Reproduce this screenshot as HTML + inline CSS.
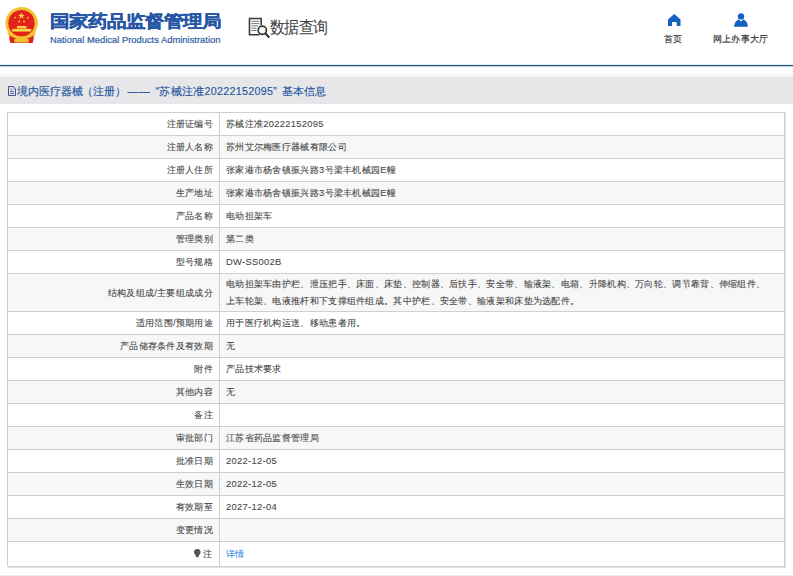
<!DOCTYPE html>
<html><head><meta charset="utf-8">
<style>
*{margin:0;padding:0;box-sizing:border-box}
html,body{width:793px;height:576px;overflow:hidden;background:#fff;font-family:"Liberation Sans",sans-serif}
.abs{position:absolute}
#emblem{left:0;top:0;width:45px;height:48px}
#t1{left:50px;top:11px;transform:scaleY(0.87);transform-origin:0 13px;font-size:19px;font-weight:900;color:#2656a5;-webkit-text-stroke:0.4px #2656a5;letter-spacing:0px;white-space:nowrap;line-height:22px}
#t2{left:50px;top:34px;font-size:9.4px;color:#2f5ca5;-webkit-text-stroke:0.2px #2f5ca5;white-space:nowrap;line-height:12px}
#qicon{left:248px;top:17px;width:23px;height:23px}
#qtext{left:270px;top:16.5px;letter-spacing:-0.7px;font-size:14.6px;color:#404040;white-space:nowrap;line-height:18px;transform:scaleY(1.13);transform-origin:0 0}
#home{left:668px;top:13.5px;width:12.5px;height:12.5px}
#user{left:734px;top:13px;width:14px;height:14px}
.nav{font-size:9.4px;letter-spacing:0.4px;color:#333;white-space:nowrap;line-height:11px;top:33px;-webkit-text-stroke:0.15px #333}
#line{left:0;top:64px;width:793px;height:3px;background:linear-gradient(#dff0f2 0,#dff0f2 33.3%,#27558a 33.3%,#27558a 66.6%,#c5d3e0 66.6%)}
#grad{left:0;top:67px;width:793px;height:10px;background:linear-gradient(#fff 0,#fefdfd 60%,#f3f3ef)}
#bar{left:0;top:77px;width:793px;height:27px;background:#e7e7e9}
.bt{top:84px;font-size:10.7px;color:#1f56a0;white-space:nowrap;line-height:14px;-webkit-text-stroke:0.15px #1f56a0}
#docicon{left:8px;top:86px;width:8px;height:10px}
table{position:absolute;left:7px;top:112px;width:778px;border-collapse:collapse;border:1px solid #cfcfcf;box-shadow:1px 1px 0 #e2e2e2}
td{border:1px solid #cfcfcf;height:23px;font-size:9.4px;letter-spacing:0.3px;color:#484848;-webkit-text-stroke:0.1px #484848;padding-bottom:1px !important;line-height:15px;padding:0 6px}
td.l{width:212px;text-align:right;padding-right:6px}

tr:nth-child(even) td{background:#f7f7f7}
#foot{left:0;top:575px;width:793px;height:1px;background:#ebebeb}
</style></head><body>
<svg id="emblem" class="abs" viewBox="0 0 45 48">
  <path d="M9.5 32 Q8.5 39 10.5 43 L32.5 43 Q34.5 39 33.5 32z" fill="#d9261c"/>
  <circle cx="21.6" cy="23.2" r="16.2" fill="#f3c232"/>
  <circle cx="21.5" cy="23.2" r="13.2" fill="#e2231a"/>
  <path d="M21.4 12.6 l0.9 2.2 2.4 0.1-1.9 1.5 0.7 2.3-2.1-1.4-2 1.4 0.7-2.3-1.9-1.5 2.4-0.1z" fill="#f7d54a"/>
  <circle cx="15.2" cy="17.6" r="0.9" fill="#f5c94a"/>
  <circle cx="27.9" cy="17.6" r="0.9" fill="#f5c94a"/>
  <circle cx="19.2" cy="21.5" r="0.9" fill="#f5c94a"/>
  <circle cx="24" cy="21.5" r="0.9" fill="#f5c94a"/>
  <rect x="17" y="26" width="9.4" height="2.4" fill="#f7d34a"/>
  <rect x="12.2" y="28.8" width="19" height="2.8" fill="#f7d34a"/>
  <path d="M7 32 Q21.6 41 36.2 32 L34.5 35.5 Q21.6 42 8.7 35.5z" fill="#f3c232"/>
  <path d="M14 39.6 Q17 37.8 21.6 39 Q26 37.8 29 39.6 L28.4 42.4 L14.6 42.4z" fill="#f3c232"/>
</svg>
<div id="t1" class="abs">国家药品监督管理局</div>
<div id="t2" class="abs">National Medical Products Administration</div>
<svg id="qicon" class="abs" viewBox="0 0 23 23">
  <path d="M11.5 17.7 H1.5 V1.5 H13.2 V8" fill="none" stroke="#3a3a3a" stroke-width="1.6"/>
  <line x1="3.4" y1="4.3" x2="11.4" y2="4.3" stroke="#777" stroke-width="1"/>
  <line x1="3.4" y1="6.6" x2="11.4" y2="6.6" stroke="#777" stroke-width="1"/>
  <line x1="3.4" y1="8.9" x2="10" y2="8.9" stroke="#777" stroke-width="1"/>
  <line x1="3.4" y1="11.2" x2="8.5" y2="11.2" stroke="#777" stroke-width="1"/>
  <line x1="3.4" y1="13.5" x2="8.5" y2="13.5" stroke="#777" stroke-width="1"/>
  <circle cx="14.3" cy="13.3" r="4.1" fill="#fff" stroke="#333" stroke-width="1.7"/>
  <line x1="17.3" y1="16.3" x2="21.3" y2="20.6" stroke="#333" stroke-width="2.1"/>
</svg>
<div id="qtext" class="abs">数据查询</div>
<svg id="home" class="abs" viewBox="0 0 13 13"><path d="M6.5 0 L13 5.6 V12.5 H9 V8.4 H4.2 V12.5 H0 V5.6z" fill="#1461c2"/></svg>
<div class="abs nav" style="left:664px">首页</div>
<svg id="user" class="abs" viewBox="0 0 14 14"><circle cx="7" cy="3.4" r="3.2" fill="#1461c2"/><path d="M0 13.7 Q0.6 8.2 4.6 6.6 L7 8.4 L9.4 6.6 Q13.4 8.2 14 13.7z" fill="#1461c2"/></svg>
<div class="abs nav" style="left:712.5px">网上办事大厅</div>
<div id="line" class="abs"></div>
<div id="grad" class="abs"></div>
<div id="bar" class="abs"></div>
<svg id="docicon" class="abs" viewBox="0 0 8 10"><path d="M0.5 0.5 H5.3 L7.5 2.7 V9.5 H0.5z" fill="none" stroke="#3e5592" stroke-width="1"/><path d="M5.3 0.8 V2.7 H7.3" fill="none" stroke="#7f8fbf" stroke-width="0.7"/><line x1="2" y1="3.3" x2="4.2" y2="3.3" stroke="#5a6aa0" stroke-width="0.8"/><line x1="2" y1="5.4" x2="6" y2="5.4" stroke="#3e5592" stroke-width="0.9"/><line x1="2" y1="7.4" x2="6" y2="7.4" stroke="#3e5592" stroke-width="0.9"/></svg>
<div class="abs bt" style="left:16.5px">境内医疗器械</div><div class="abs bt" style="left:82px">（注册）</div><div class="abs bt" style="left:127.5px;letter-spacing:0.8px">——</div><div class="abs bt" style="left:155.5px;letter-spacing:0.3px">“苏械注准20222152095”</div><div class="abs bt" style="left:282px">基本信息</div>
<table>
<tr><td class="l">注册证编号</td><td class="v">苏械注准20222152095</td></tr>
<tr><td class="l">注册人名称</td><td class="v">苏州艾尔梅医疗器械有限公司</td></tr>
<tr><td class="l">注册人住所</td><td class="v">张家港市杨舍镇振兴路3号梁丰机械园E幢</td></tr>
<tr><td class="l">生产地址</td><td class="v">张家港市杨舍镇振兴路3号梁丰机械园E幢</td></tr>
<tr><td class="l">产品名称</td><td class="v">电动担架车</td></tr>
<tr><td class="l">管理类别</td><td class="v">第二类</td></tr>
<tr><td class="l">型号规格</td><td class="v">DW-SS002B</td></tr>
<tr><td class="l" style="height:38px">结构及组成/主要组成成分</td><td class="v" style="line-height:17px">电动担架车由护栏、泄压把手、床面、床垫、控制器、后扶手、安全带、输液架、电箱、升降机构、万向轮、调节靠背、伸缩组件、<br>上车轮架、电液推杆和下支撑组件组成。其中护栏、安全带、输液架和床垫为选配件。</td></tr>
<tr><td class="l">适用范围/预期用途</td><td class="v">用于医疗机构运送、移动患者用。</td></tr>
<tr><td class="l">产品储存条件及有效期</td><td class="v">无</td></tr>
<tr><td class="l">附件</td><td class="v">产品技术要求</td></tr>
<tr><td class="l">其他内容</td><td class="v">无</td></tr>
<tr><td class="l">备注</td><td class="v"></td></tr>
<tr><td class="l">审批部门</td><td class="v">江苏省药品监督管理局</td></tr>
<tr><td class="l">批准日期</td><td class="v">2022-12-05</td></tr>
<tr><td class="l">生效日期</td><td class="v">2022-12-05</td></tr>
<tr><td class="l">有效期至</td><td class="v">2027-12-04</td></tr>
<tr><td class="l">变更情况</td><td class="v"></td></tr>
<tr><td class="l" style="height:25px;padding-right:7px"><svg width="6.6" height="8.6" viewBox="0 0 7 9" style="vertical-align:-1px;margin-right:1.8px"><path d="M3.5 0 A3.5 3.5 0 0 1 7 3.5 Q7 5 5.3 6.6 L4.6 8.6 H2.4 L1.7 6.6 Q0 5 0 3.5 A3.5 3.5 0 0 1 3.5 0z" fill="#545454"/></svg>注</td><td class="v" style="color:#3b8ce6;-webkit-text-stroke:0.1px #3b8ce6">详情</td></tr>
</table>
<div id="foot" class="abs"></div>
</body></html>
